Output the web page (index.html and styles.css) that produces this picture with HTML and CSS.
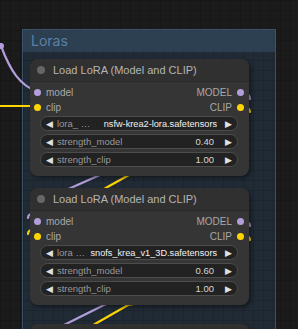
FILE: index.html
```html
<!DOCTYPE html>
<html lang="en">
<head>
  <meta charset="UTF-8">
  <title>Loras</title>
  <link rel="stylesheet" href="styles.css">
</head>
<body>
  <div class="canvas">
    <!-- Groupe "Loras" -->
    <div class="group">
      <div class="group-title">Loras</div>
      <div class="group-body">

        <div class="node">
          <div class="node-title"><span class="node-dot"></span>Load LoRA (Model and CLIP)</div>
          <div class="slots">
            <div class="slot-row">
              <span class="slot"><i class="pin pin-model"></i>model</span>
              <span class="slot out">MODEL<i class="pin pin-model"></i></span>
            </div>
            <div class="slot-row">
              <span class="slot"><i class="pin pin-clip"></i>clip</span>
              <span class="slot out">CLIP<i class="pin pin-clip"></i></span>
            </div>
          </div>
          <div class="widgets">
            <div class="widget"><span class="arrow">&#9664;</span><span class="label">lora_ …</span><span class="value file">nsfw-krea2-lora.safetensors</span><span class="arrow">&#9654;</span></div>
            <div class="widget"><span class="arrow">&#9664;</span><span class="label">strength_model</span><span class="value">0.40</span><span class="arrow">&#9654;</span></div>
            <div class="widget"><span class="arrow">&#9664;</span><span class="label">strength_clip</span><span class="value">1.00</span><span class="arrow">&#9654;</span></div>
          </div>
        </div>

        <div class="node">
          <div class="node-title"><span class="node-dot"></span>Load LoRA (Model and CLIP)</div>
          <div class="slots">
            <div class="slot-row">
              <span class="slot"><i class="pin pin-model"></i>model</span>
              <span class="slot out">MODEL<i class="pin pin-model"></i></span>
            </div>
            <div class="slot-row">
              <span class="slot"><i class="pin pin-clip"></i>clip</span>
              <span class="slot out">CLIP<i class="pin pin-clip"></i></span>
            </div>
          </div>
          <div class="widgets">
            <div class="widget"><span class="arrow">&#9664;</span><span class="label">lora …</span><span class="value file">snofs_krea_v1_3D.safetensors</span><span class="arrow">&#9654;</span></div>
            <div class="widget"><span class="arrow">&#9664;</span><span class="label">strength_model</span><span class="value">0.60</span><span class="arrow">&#9654;</span></div>
            <div class="widget"><span class="arrow">&#9664;</span><span class="label">strength_clip</span><span class="value">1.00</span><span class="arrow">&#9654;</span></div>
          </div>
        </div>

        <div class="node node-last">
          <div class="node-title"><span class="node-dot"></span>Load LoRA (Model and CLIP)</div>
        </div>

      </div>
    </div>

    <!-- Liens entre les noeuds (derrière les noeuds) -->
    <svg class="links" width="298" height="329" viewBox="0 0 298 329">
      <g fill="none" stroke-width="2.2" stroke-linecap="round">
        <path d="M1 46 C 10 70, 20 86, 37 91" stroke="#b39ddb"/>
        <path d="M0 106 L 37 106" stroke="#ffd500"/>
        <path d="M120 166 L 55 195" stroke="#b39ddb"/>
        <path d="M145 166 L 95 194" stroke="#ffd500"/>
        <path d="M60 327 L 118 298" stroke="#b39ddb"/>
        <path d="M88 328 L 128 305 L 140 303" stroke="#ffd500"/>
        <path d="M244 93 Q 250 94 250 99" stroke="#b39ddb"/>
        <path d="M244 107 Q 250 108 250 112" stroke="#ffd500"/>
        <path d="M244 221 Q 250 222 250 226" stroke="#b39ddb"/>
        <path d="M244 235 Q 250 236 250 240" stroke="#ffd500"/>
        <path d="M34 213 Q 28 214 28 218" stroke="#b39ddb"/>
        <path d="M34 229 Q 28 230 28 234" stroke="#ffd500"/>
      </g>
      <circle cx="1" cy="46" r="3" fill="#b39ddb"/>
    </svg>
  </div>
</body>
</html>
```
FILE: styles.css
```css
/* Fond du canvas avec une grille discrète */
body {
  margin: 0;
  background: #1b1b1b;
  font-family: "Liberation Sans", Arial, sans-serif;
  overflow: hidden;
}

.canvas {
  position: relative;
  width: 298px;
  height: 329px;
  overflow: hidden;
  background-color: #1b1b1b;
  background-image:
    linear-gradient(#171717 1px, transparent 1px),
    linear-gradient(90deg, #171717 1px, transparent 1px);
  background-size: 10px 10px;
}

/* Groupe "Loras" */
.group {
  position: absolute;
  left: 22px;
  top: 29px;
  width: 252px;
  height: 330px;
  border: 1px solid #3b5166;
  border-bottom: none;
  background-color: #212b36;
  background-image:
    linear-gradient(rgba(0,0,0,0.12) 1px, transparent 1px),
    linear-gradient(90deg, rgba(0,0,0,0.12) 1px, transparent 1px);
  background-size: 10px 10px;
}

.group-title {
  height: 22px;
  line-height: 22px;
  padding-left: 8px;
  font-family: Inter, "Liberation Sans", sans-serif;
  font-size: 14px;
  color: #5a80a6;
  background: rgba(52, 75, 98, 0.65);
}

.group-body {
  display: flex;
  flex-direction: column;
  gap: 12px;
  padding: 7px 0 0 7px;
}

/* Noeud */
.node {
  position: relative;
  z-index: 2;
  width: 219px;
  height: 117px;
  box-sizing: border-box;
  background: #353535;
  border-radius: 8px;
  box-shadow: 2px 2px 4px rgba(0,0,0,0.45);
  overflow: hidden;
}

.node-last {
  margin-top: 7px;
}

.node-title {
  display: flex;
  align-items: center;
  height: 23px;
  padding-left: 7px;
  font-size: 11px;
  color: #b5b5b5;
  background: #303030;
  border-bottom: 1px solid #2a2a2a;
  box-sizing: border-box;
  white-space: nowrap;
}

.node-dot {
  width: 8px;
  height: 8px;
  border-radius: 50%;
  background: #666;
  margin-right: 8px;
}

.slots {
  padding-top: 3px;
}

.slot-row {
  display: flex;
  justify-content: space-between;
  align-items: center;
  height: 15px;
  font-size: 10px;
  color: #a8a8a8;
}

.slot {
  display: flex;
  align-items: center;
  gap: 5px;
  padding-left: 4px;
}

.slot.out {
  padding-left: 0;
  padding-right: 5px;
}

.pin {
  width: 7px;
  height: 7px;
  border-radius: 50%;
}

.pin-model {
  background: #b39ddb;
}

.pin-clip {
  background: #ffd500;
}

/* Widgets (sélecteurs et valeurs) */
.widgets {
  display: flex;
  flex-direction: column;
  gap: 3px;
  padding: 1px 11px 0 10px;
}

.widget {
  display: flex;
  align-items: center;
  height: 15px;
  box-sizing: border-box;
  padding: 0 5px;
  border: 1px solid #4c4c4c;
  border-radius: 8px;
  background: #222;
  font-size: 9.5px;
  color: #999;
  white-space: nowrap;
}

.arrow {
  flex-shrink: 0;
  font-family: "DejaVu Sans", sans-serif;
  font-size: 9px;
  color: #e0e0e0;
}

.label {
  margin-left: 4px;
}

.value {
  flex: 1;
  min-width: 0;
  overflow: hidden;
  text-align: right;
  color: #d6d6d6;
  margin-right: 11px;
}

.value.file {
  color: #f2f2f2;
  font-size: 9.2px;
  margin-left: 3px;
  margin-right: 8px;
}

/* Liens */
.links {
  position: absolute;
  left: 0;
  top: 0;
  z-index: 1;
}
```
